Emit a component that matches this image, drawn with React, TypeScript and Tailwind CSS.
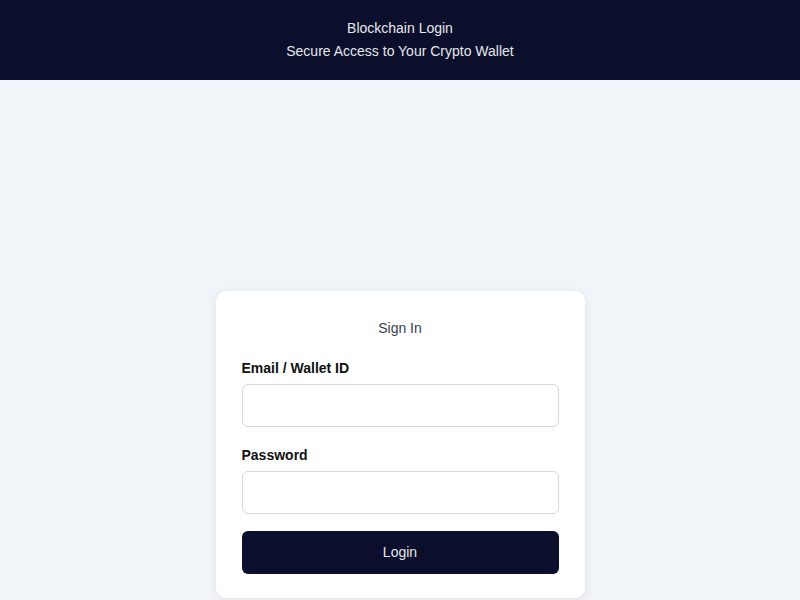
import React from 'react';

const App: React.FC = () => {
  return (
    <div className="min-h-screen bg-[#f1f5f9] font-['Liberation_Sans',Arial,sans-serif]">
      <header className="bg-[#0b0f2b] h-[80px] flex flex-col items-center justify-center text-[#e5e7eb] text-[14px] leading-[23px]">
        <h1>Blockchain Login</h1>
        <p>Secure Access to Your Crypto Wallet</p>
      </header>

      <main className="flex justify-center pt-[211px]">
        <div className="w-[369px] bg-white rounded-[10px] shadow-[0_2px_10px_rgba(0,0,0,0.08)] px-[26px] pt-[27px] pb-[24px]">
          <h2 className="text-center text-[14px] leading-[20px] text-[#374151]">Sign In</h2>

          <form className="mt-[21px] flex flex-col" onSubmit={(e) => e.preventDefault()}>
            <label className="text-[14px] leading-[18px] font-bold text-[#111111]">Email / Wallet ID</label>
            <input
              type="text"
              className="mt-[7px] h-[43px] w-full rounded-[6px] border border-[#d8d8d8] bg-white px-3 outline-none"
            />

            <label className="mt-[19px] text-[14px] leading-[18px] font-bold text-[#111111]">Password</label>
            <input
              type="password"
              className="mt-[7px] h-[43px] w-full rounded-[6px] border border-[#d8d8d8] bg-white px-3 outline-none"
            />

            <button
              type="submit"
              className="mt-[17px] h-[43px] w-full rounded-[6px] bg-[#0b0f2b] text-[14px] text-[#e5e7eb]"
            >
              Login
            </button>
          </form>
        </div>
      </main>
    </div>
  );
};

export default App;
